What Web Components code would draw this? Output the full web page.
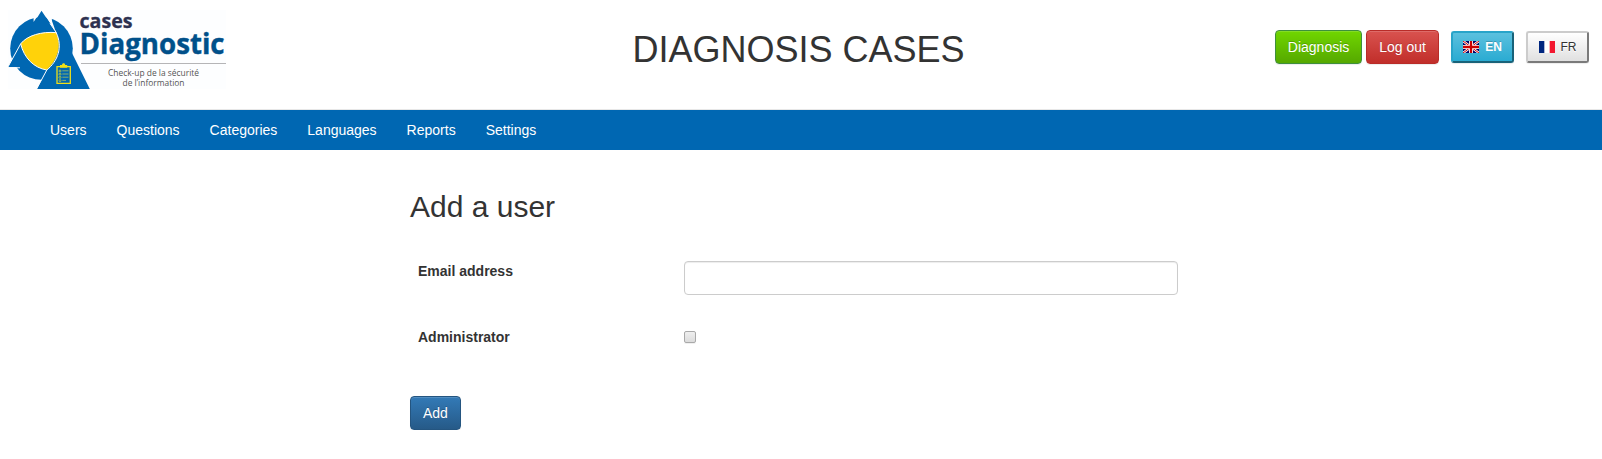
<!DOCTYPE html>
<html lang="en">
<head>
<meta charset="utf-8">
<title>Diagnosis CASES</title>
<style>
html,body{margin:0;background:#fff}
body{font:14px/20px "Liberation Sans",Arial,sans-serif;color:#333}
</style>
</head>
<body>
<cases-app></cases-app>
<script>
function define(name, html){
  const t=document.createElement('template');
  t.innerHTML=html;
  customElements.define(name, class extends HTMLElement{
    constructor(){super();this.attachShadow({mode:'open'}).append(t.content.cloneNode(true));}
  });
}
define('cases-logo', `
<style>:host{display:block;width:218px;height:80px}svg{display:block;overflow:visible}
text{font-family:"Open Sans","Noto Sans",sans-serif}</style>
<svg width="218" height="80" viewBox="8 10 218 80">
<rect x="8" y="10" width="218" height="79" fill="#fdfeff"/>
<circle cx="41.5" cy="48.5" r="31.3" fill="#0067b2"/>
<path d="M41.5 10L33.6 22L33.6 16L41 14L51.5 15L52 21L56 32.5Z" fill="#fdfeff"/>
<path d="M41.5 10.8L56.2 32.4H28L34.2 22.5Z" fill="#0067b2"/>
<path d="M20.5 43.5L7.8 67.3L22 67L46.5 70L30 58Z" fill="#0067b2"/>
<path d="M46.5 70.5L36.8 89H89.8L72 53L60 40Z" fill="#0067b2"/>
<path d="M56.2 32.6C42 31 28 35 20.8 43.6C24 58 34 68 46.5 70C58 60 62 46 56.2 32.6Z" fill="#ffd20a"/>
<path d="M50 23.5L56.4 32.7C42 31.2 27 35.5 20.7 43.8L7.6 67.6L20 67.8M20.7 43.8C24 58 34 68 46.8 70L36.6 89M46.8 70C58 61 63 47 56.2 32.6" fill="none" stroke="#fff" stroke-width="1"/>
<path d="M57 66.7H70.3V83.3H57Z" fill="none" stroke="#f0df18" stroke-width="1.3"/>
<path d="M60 67.7V65H62C62 62.5 65.2 62.5 65.2 65H67.2V67.7Z" fill="#f0df18"/>
<g fill="none" stroke="#d9db31" stroke-width=".7"><circle cx="60" cy="71" r="1"/><circle cx="60" cy="74.2" r="1"/><circle cx="60" cy="77.4" r="1"/><circle cx="60" cy="80.6" r="1"/></g>
<path d="M62.3 70.8H68.5M62.3 74H68.5M62.3 77.2H68.5M62.3 80.4H66" stroke="#a9c15a" stroke-width=".8"/>
<text x="79.5" y="28.3" font-size="19.8" font-weight="700" fill="#2d3150" stroke="#2d3150" stroke-width=".3" textLength="53" lengthAdjust="spacingAndGlyphs">cases</text>
<text x="79.6" y="53.5" font-size="28.6" font-weight="700" fill="#00508a" stroke="#00508a" stroke-width=".4" textLength="145" lengthAdjust="spacingAndGlyphs">Diagnostic</text>
<path d="M81 63.5H226" stroke="#b5b5b7"/>
<text x="108" y="76.3" font-size="8.2" fill="#555" textLength="91" lengthAdjust="spacingAndGlyphs">Check-up de la sécurité</text>
<text x="122.5" y="86" font-size="8.2" fill="#555" textLength="62" lengthAdjust="spacingAndGlyphs">de l’information</text>
</svg>`);
define('app-button', `
<style>
:host{display:block;flex:none}
button{display:block;box-sizing:border-box;width:100%;height:34px;margin:0;padding:0 12px;border:1px solid #245580;border-radius:4px;background:linear-gradient(#337ab7,#265a88);color:#fff;font:14px/20px "Liberation Sans",Arial,sans-serif;text-shadow:0 -1px 0 rgba(0,0,0,.2);box-shadow:inset 0 1px 0 rgba(255,255,255,.15),0 1px 1px rgba(0,0,0,.075);white-space:nowrap}
:host([kind=success]) button{background:linear-gradient(#70d600,#55a800);border-color:#3e8f3e}
:host([kind=danger]) button{background:linear-gradient(#d9534f,#c12e2a);border-color:#b92c28}
</style><button type="button"><slot></slot></button>`);
define('lang-button', `
<style>
:host{display:block;flex:none;width:63px;height:32px}
button{display:flex;align-items:center;justify-content:center;gap:6px;box-sizing:border-box;width:100%;height:100%;margin:0;padding:0;border:2px solid;border-color:#ccc #7a7a7a #7a7a7a #ccc;border-radius:3px;background:linear-gradient(#fff,#e0e0e0);color:#333;font:12px/15px "Liberation Sans",Arial,sans-serif;text-shadow:0 1px 0 #fff;box-shadow:0 1px 1px rgba(0,0,0,.075)}
:host([active]) button{background:linear-gradient(#5bc0de,#2aabd2);border-color:#28a4c9 #186279 #186279 #28a4c9;color:#fff;font-weight:700;text-shadow:0 -1px 0 rgba(0,0,0,.2)}
</style><button type="button"><slot name="flag"></slot><span><slot></slot></span></button>`);
define('flag-en', `<style>:host{display:block;width:16px;height:12px}svg{display:block}</style>
<svg width="16" height="12" viewBox="0 0 16 12"><path fill="#006" d="M0 0H16V12H0Z"/><path d="M0 0L16 12M16 0L0 12" stroke="#fff" stroke-width="2.4"/><path d="M0 0L16 12M16 0L0 12" stroke="#c00" stroke-width="1"/><path d="M8 0V12M0 6H16" stroke="#fff" stroke-width="4"/><path d="M8 0V12M0 6H16" stroke="#c00" stroke-width="2.3"/></svg>`);
define('flag-fr', `<style>:host{display:block;width:16px;height:12px}svg{display:block}</style>
<svg width="16" height="12" viewBox="0 0 16 12"><path fill="#fff" d="M0 0H16V12H0Z"/><path fill="#00267f" d="M0 0H5.33V12H0Z"/><path fill="#f31830" d="M10.67 0H16V12H10.67Z"/></svg>`);
define('app-header', `
<style>
:host{display:grid;grid-template-columns:1fr auto 1fr;height:109px;box-sizing:border-box;padding:0 13px 0 8px}
cases-logo{margin-top:10px}
h1{margin:30px 0 0;font-size:36px;line-height:40px;font-weight:500}
.actions{display:flex;justify-content:flex-end;align-items:center;height:34px;margin-top:30px}
app-button+app-button{margin-left:4px}
lang-button{margin-left:12px}
</style>
<cases-logo></cases-logo><h1>DIAGNOSIS CASES</h1>
<div class="actions"><app-button kind="success">Diagnosis</app-button><app-button kind="danger">Log out</app-button>
<lang-button active><flag-en slot="flag"></flag-en>EN</lang-button><lang-button><flag-fr slot="flag"></flag-fr>FR</lang-button></div>`);
define('app-nav', `
<style>
:host{display:flex;height:41px;box-sizing:border-box;padding:0 35px;background:#0067b2;border-top:1px solid #e7e7e7}
a{display:block;padding:10px 15px;color:#fff}
</style><a>Users</a><a>Questions</a><a>Categories</a><a>Languages</a><a>Reports</a><a>Settings</a>`);
define('form-row', `
<style>
:host{display:grid;grid-template-columns:266px 494px;padding-left:8px;align-items:start}
label{font-weight:700}
</style><label><slot name="label"></slot></label><slot></slot>`);
define('text-field', `
<style>:host{display:block}
input{display:block;box-sizing:border-box;width:100%;height:34px;margin:0;padding:6px 12px;border:1px solid #ccc;border-radius:4px;box-shadow:inset 0 1px 1px rgba(0,0,0,.075);outline:0}</style><input type="text" aria-label="Email address">`);
define('check-field', `
<style>:host{display:block;padding-top:4px}
input{appearance:none;display:block;box-sizing:border-box;width:12px;height:12px;margin:0;border:1px solid #a9a9a9;border-radius:2px;background:linear-gradient(#efefef,#dcdcdc);box-shadow:0 1px 0 rgba(0,0,0,.06)}</style><input type="checkbox" aria-label="Administrator">`);
define('user-form', `
<style>
:host{display:flex;flex-direction:column;align-items:flex-start;width:768px;margin:40px 0 0 410px}
h2{margin:0;font-size:30px;line-height:33px;font-weight:500}
.email{margin-top:38px}.admin{margin-top:32px}
app-button{margin-top:49px}
</style>
<h2>Add a user</h2>
<form-row class="email"><span slot="label">Email address</span><text-field></text-field></form-row>
<form-row class="admin"><span slot="label">Administrator</span><check-field></check-field></form-row>
<app-button>Add</app-button>`);
define('cases-app', `<style>:host{display:block}</style><app-header></app-header><app-nav></app-nav><user-form></user-form>`);
</script>
</body>
</html>
